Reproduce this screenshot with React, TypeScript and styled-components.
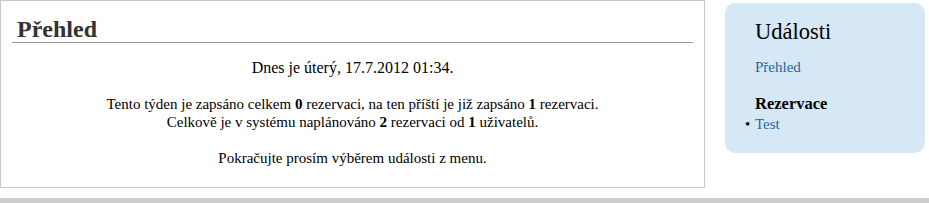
import styled, { createGlobalStyle } from "styled-components";

const GlobalStyle = createGlobalStyle`
  html, body {
    margin: 0;
    padding: 0;
    background: #fff;
    color: #000;
  }
`;

const Page = styled.div`
  width: 929px;
  font-family: "Liberation Serif", "Times New Roman", serif;
  font-size: 15px;
`;

const Columns = styled.div`
  display: flex;
  align-items: flex-start;
`;

const Content = styled.div`
  width: 705px;
  height: 188px;
  border: 1px solid #c8c8c8;
  background: #fff;
  padding: 0 11px;
  box-sizing: border-box;
`;

const Title = styled.h1`
  margin: 15px 0 0;
  padding: 0 0 0 5px;
  font-size: 24px;
  font-weight: bold;
  color: #333;
  line-height: 26px;
  border-bottom: 1px solid #999;
`;

const Para = styled.p<{ $first?: boolean; $size?: number }>`
  margin: ${(p) => (p.$first ? 16 : 18)}px 0 0;
  text-align: center;
  font-size: ${(p) => p.$size ?? 15}px;
  line-height: 18px;
`;

const Sidebar = styled.aside`
  margin: 3px 0 0 20px;
  width: 200px;
  height: 150px;
  box-sizing: border-box;
  background: #d6e8f6;
  border-radius: 10px;
  padding: 16px 12px 0 30px;
`;

const SideTitle = styled.h2`
  margin: 0;
  font-size: 22.5px;
  font-weight: normal;
  line-height: 26px;
`;

const NavLink = styled.a<{ $gap?: number }>`
  display: block;
  margin-top: ${(p) => p.$gap ?? 13}px;
  color: #1d6b98;
  text-decoration: none;
  line-height: 18px;
`;

const Section = styled.h3`
  margin: 18px 0 0;
  font-size: 16.5px;
  font-weight: bold;
  line-height: 20px;
`;

const List = styled.ul`
  margin: 1px 0 0;
  padding: 0;
  list-style: none;
  line-height: 18px;
`;

const Item = styled.li`
  display: flex;

  &::before {
    content: "•";
    width: 10px;
    margin-left: -10px;
    flex: none;
  }
`;

const Footer = styled.div`
  height: 5px;
  margin-top: 10px;
  background: #cccccc;
`;

export default function App() {
  return (
    <Page>
      <GlobalStyle />
      <Columns>
        <Content>
          <Title>Přehled</Title>
          <Para $first $size={16}>
            Dnes je úterý, 17.7.2012 01:34.
          </Para>
          <Para>
            Tento týden je zapsáno celkem <b>0</b> rezervaci, na ten příští je již
            zapsáno <b>1</b> rezervaci.
            <br />
            Celkově je v systému naplánováno <b>2</b> rezervaci od <b>1</b> uživatelů.
          </Para>
          <Para>Pokračujte prosím výběrem události z menu.</Para>
        </Content>
        <Sidebar>
          <SideTitle>Události</SideTitle>
          <NavLink href="#">Přehled</NavLink>
          <Section>Rezervace</Section>
          <List>
            <Item>
              <NavLink href="#" $gap={0}>
                Test
              </NavLink>
            </Item>
          </List>
        </Sidebar>
      </Columns>
      <Footer />
    </Page>
  );
}
